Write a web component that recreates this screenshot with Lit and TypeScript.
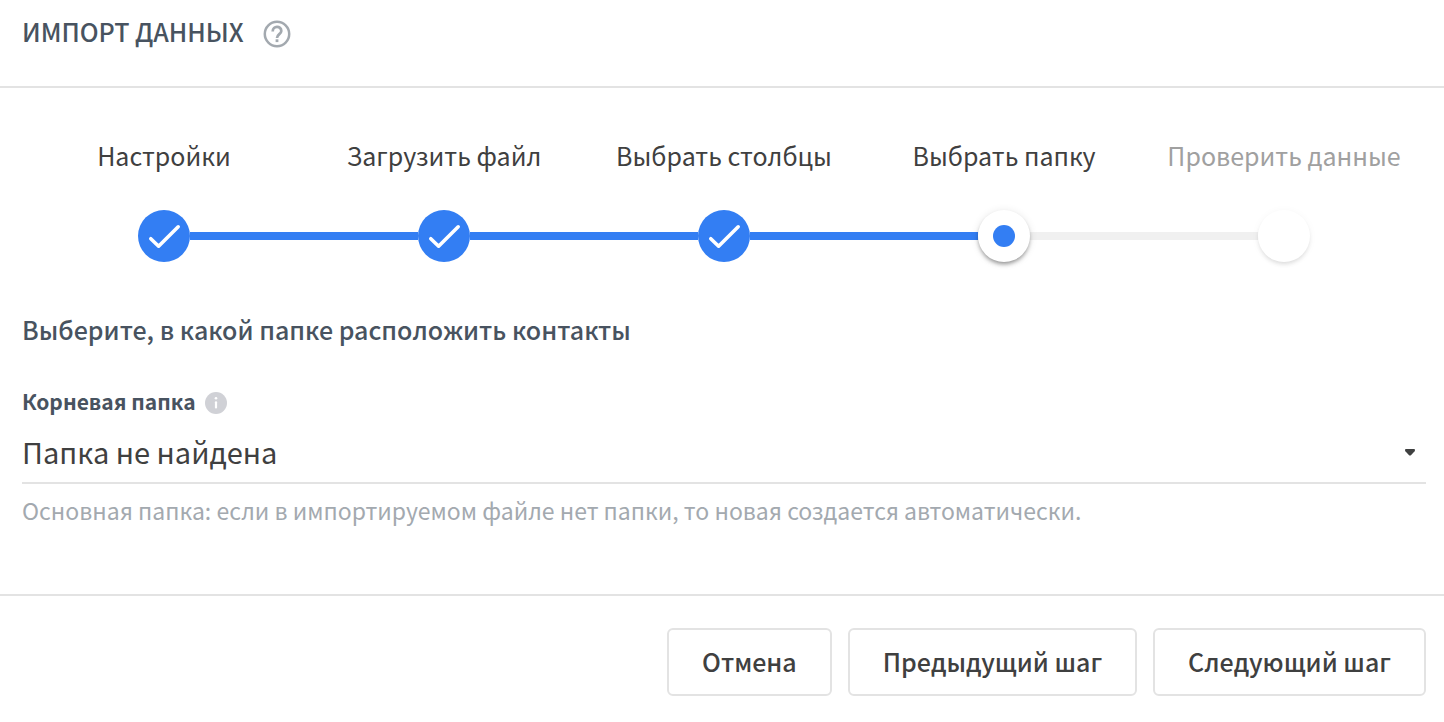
import { LitElement, html, css, svg, nothing } from "lit";
import { customElement, property, state } from "lit/decorators.js";
import { classMap } from "lit/directives/class-map.js";

type StepStatus = "done" | "current" | "upcoming";

interface Step {
  label: string;
  status: StepStatus;
}

@customElement("import-stepper")
class ImportStepper extends LitElement {
  @property({ attribute: false }) steps: Step[] = [];

  static styles = css`
    :host {
      display: block;
    }
    .steps {
      display: grid;
      grid-auto-flow: column;
      grid-auto-columns: minmax(0, 1fr);
      margin: 0;
      padding: 0;
      list-style: none;
    }
    .step {
      display: flex;
      flex-direction: column;
      align-items: center;
      gap: 38px;
      color: #3f4040;
    }
    .label {
      font-size: 25px;
      line-height: 34px;
      white-space: nowrap;
    }
    .upcoming .label {
      color: #a0a0a0;
    }
    .track {
      display: flex;
      align-items: center;
      align-self: stretch;
    }
    .line {
      flex: 1;
      height: 8px;
      background: #f0f0f0;
    }
    .line.filled {
      background: #337ef3;
    }
    .line.hidden {
      visibility: hidden;
    }
    .marker {
      position: relative;
      display: flex;
      align-items: center;
      justify-content: center;
      width: 52px;
      height: 52px;
      border-radius: 50%;
      background: #fff;
    }
    .done .marker {
      background: #337ef3;
    }
    .current .marker {
      box-shadow: 0 3px 4px -1px rgba(0, 0, 0, 0.4), 0 1px 8px rgba(0, 0, 0, 0.1);
    }
    .upcoming .marker {
      box-shadow: 0 3px 4px -1px rgba(0, 0, 0, 0.12), 0 1px 8px rgba(0, 0, 0, 0.04);
    }
    .dot {
      width: 22px;
      height: 22px;
      border-radius: 50%;
      background: #337ef3;
    }
  `;

  private renderMarker(status: StepStatus) {
    if (status === "done") {
      return html`<svg width="52" height="52" viewBox="0 0 52 52" aria-hidden="true">
        ${svg`<path d="M12.8 28.7 L20.6 36.2 L40.2 16.8" fill="none" stroke="#fff" stroke-width="3.6" stroke-linecap="round" stroke-linejoin="round"/>`}
      </svg>`;
    }
    return status === "current" ? html`<span class="dot"></span>` : nothing;
  }

  render() {
    const last = this.steps.length - 1;
    return html`<ol class="steps">
      ${this.steps.map(
        (step, i) => html`<li
          class=${classMap({ step: true, [step.status]: true })}
          aria-current=${step.status === "current" ? "step" : nothing}
        >
          <span class="label">${step.label}</span>
          <div class="track">
            <span class=${classMap({ line: true, hidden: i === 0, filled: step.status !== "upcoming" })}></span>
            <span class="marker">${this.renderMarker(step.status)}</span>
            <span class=${classMap({ line: true, hidden: i === last, filled: step.status === "done" })}></span>
          </div>
        </li>`
      )}
    </ol>`;
  }
}

@customElement("app-root")
class AppRoot extends LitElement {
  @state() private steps: Step[] = [
    { label: "Настройки", status: "done" },
    { label: "Загрузить файл", status: "done" },
    { label: "Выбрать столбцы", status: "done" },
    { label: "Выбрать папку", status: "current" },
    { label: "Проверить данные", status: "upcoming" },
  ];

  static styles = css`
    :host {
      display: block;
      background: #fff;
      color: #3f4040;
      font-family: "Source Sans Pro", "Noto Sans CJK SC", "Noto Sans", sans-serif;
    }
    .header {
      display: flex;
      align-items: flex-end;
      gap: 19px;
      padding: 14px 18px 38px 22px;
      border-bottom: 2px solid #e3e3e3;
    }
    .title,
    .subtitle {
      margin: 0;
      color: #485360;
      font-size: 25px;
      line-height: 34px;
      font-weight: 500;
    }
    .icon-button {
      display: flex;
      padding: 0;
      border: 0;
      background: none;
      cursor: pointer;
    }
    .stepper {
      padding: 50px 20px 0 24px;
    }
    .content {
      padding: 50px 18px 66px 22px;
    }
    .label-row {
      display: flex;
      align-items: flex-end;
      gap: 9px;
      margin-top: 40px;
    }
    .label-row .icon-button {
      padding-bottom: 2px;
    }
    .field-label {
      color: #485360;
      font-size: 21px;
      line-height: 30px;
      font-weight: 600;
    }
    .select-box {
      display: grid;
      align-items: center;
      margin-top: 10px;
      border-bottom: 2px solid #e3e3e3;
    }
    .select {
      grid-area: 1 / 1;
      width: 100%;
      height: 50px;
      margin-bottom: 6px;
      padding: 0 40px 0 0;
      border: 0;
      background: none;
      color: inherit;
      font: inherit;
      font-size: 29px;
      appearance: none;
    }
    .arrow {
      grid-area: 1 / 1;
      justify-self: end;
      margin: 0 11px 4px 0;
      pointer-events: none;
    }
    .hint {
      margin: 8px 0 0;
      color: #a3a9af;
      font-size: 23px;
      line-height: 36px;
    }
    .footer {
      display: flex;
      flex-wrap: wrap;
      justify-content: flex-end;
      gap: 16px;
      padding: 32px 18px 26px;
      border-top: 2px solid #e3e3e3;
    }
    .button {
      height: 68px;
      padding: 0 33px 2px;
      border: 2px solid #e3e3e3;
      border-radius: 6px;
      background: #fff;
      color: inherit;
      font: inherit;
      font-size: 25px;
      font-weight: 500;
      cursor: pointer;
    }
  `;

  render() {
    return html`
      <header class="header">
        <h1 class="title">ИМПОРТ ДАННЫХ</h1>
        <button class="icon-button" type="button" aria-label="Справка">
          <svg width="28" height="28" viewBox="0 0 28 28" fill="none" stroke="#a3a9af" aria-hidden="true">
            <circle cx="14" cy="14" r="12.2" stroke-width="2.5" />
            <path d="M9.7 11.4 C9.7 5.4 18.3 5.4 18.3 11 C18.3 14 14 14.4 14 18" stroke-width="2.7" />
            <path d="M12.6 20.7 h2.8" stroke-width="2.8" />
          </svg>
        </button>
      </header>
      <main>
        <import-stepper class="stepper" .steps=${this.steps}></import-stepper>
        <section class="content">
          <h2 class="subtitle">Выберите, в какой папке расположить контакты</h2>
          <div class="label-row">
            <label class="field-label" for="folder">Корневая папка</label>
            <button class="icon-button" type="button" aria-label="Информация">
              <svg width="22" height="22" viewBox="0 0 22 22" aria-hidden="true">
                <circle cx="11" cy="11" r="11" fill="#d0d1d6" />
                <circle cx="11" cy="6.3" r="1.3" fill="#fff" />
                <rect x="9.9" y="9.2" width="2.2" height="7.2" rx="1" fill="#fff" />
              </svg>
            </button>
          </div>
          <div class="select-box">
            <select class="select" id="folder" aria-describedby="folder-hint">
              <option>Папка не найдена</option>
            </select>
            <svg class="arrow" width="10" height="7" viewBox="0 0 10 7" aria-hidden="true">
              <path d="M1.2 0 H8.8 C10 0 10.3 1.4 9.6 2.2 L6.2 6 Q5 7.1 3.8 6 L0.4 2.2 C-0.3 1.4 0 0 1.2 0 Z" fill="#3f4040" />
            </svg>
          </div>
          <p class="hint" id="folder-hint">
            Основная папка: если в импортируемом файле нет папки, то новая создается автоматически.
          </p>
        </section>
      </main>
      <footer class="footer">
        <button class="button" type="button">Отмена</button>
        <button class="button" type="button">Предыдущий шаг</button>
        <button class="button" type="button">Следующий шаг</button>
      </footer>
    `;
  }
}
